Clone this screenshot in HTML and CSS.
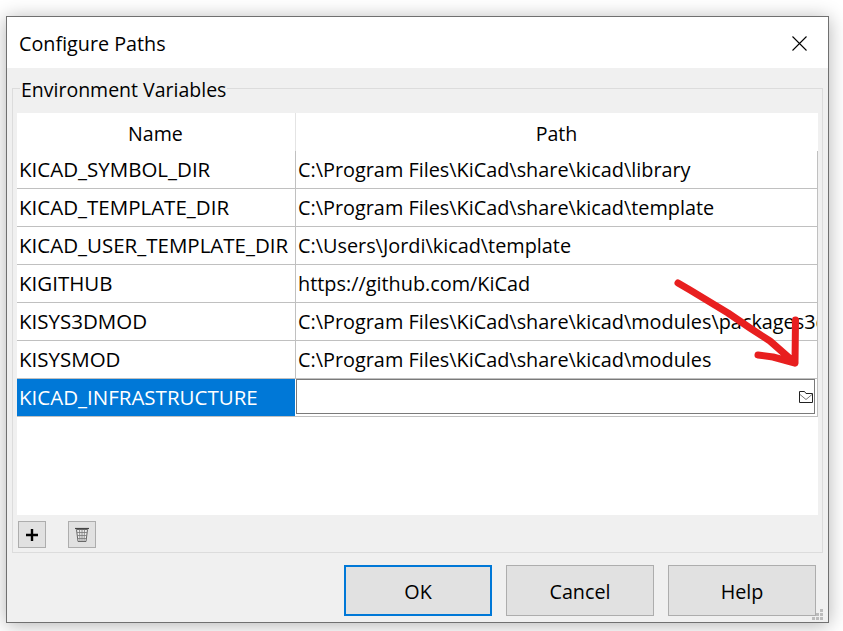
FILE: index.html
```html
<!DOCTYPE html>
<html lang="en">
<head>
<meta charset="utf-8">
<title>Configure Paths</title>
<link rel="stylesheet" href="styles.css">
</head>
<body>
<div class="dialog">
  <header class="titlebar">
    <h1 class="title">Configure Paths</h1>
    <svg class="close" width="15" height="15" viewBox="0 0 15 15"><path d="M0.5 0.5L14.5 14.5M14.5 0.5L0.5 14.5" stroke="#000" stroke-width="1.1" fill="none"/></svg>
  </header>
  <main class="content">
    <section class="group">
      <div class="legend">Environment Variables</div>
      <div class="grid">
        <div class="head">
          <div class="name hcell">Name</div>
          <div class="path hcell">Path</div>
        </div>
        <div class="row"><div class="name cell">KICAD_SYMBOL_DIR</div><div class="path cell">C:\Program Files\KiCad\share\kicad\library</div></div>
        <div class="row"><div class="name cell">KICAD_TEMPLATE_DIR</div><div class="path cell">C:\Program Files\KiCad\share\kicad\template</div></div>
        <div class="row"><div class="name cell">KICAD_USER_TEMPLATE_DIR</div><div class="path cell">C:\Users\Jordi\kicad\template</div></div>
        <div class="row"><div class="name cell">KIGITHUB</div><div class="path cell">https://github.com/KiCad</div></div>
        <div class="row"><div class="name cell">KISYS3DMOD</div><div class="path cell">C:\Program Files\KiCad\share\kicad\modules\packages3d</div></div>
        <div class="row"><div class="name cell">KISYSMOD</div><div class="path cell">C:\Program Files\KiCad\share\kicad\modules</div></div>
        <div class="row"><div class="name cell selected">KICAD_INFRASTRUCTURE</div>
          <div class="path editcell">
            <div class="editor">
              <svg width="14" height="12" viewBox="0 0 14 12"><path d="M0.5 11.5V0.5H5.500L7 2.500H13.500V11.500Z" fill="none" stroke="#222"/><path d="M1 3.500L7 8.500L13 3.500" fill="none" stroke="#777"/></svg>
            </div>
          </div>
        </div>
        <div class="blank"></div>
      </div>
      <div class="tools">
        <button class="tool" type="button" aria-label="Add">
          <svg width="14" height="14" viewBox="0 0 14 14"><path d="M7 1V13M1 7H13" stroke="#000" stroke-width="2.4" fill="none"/></svg>
        </button>
        <button class="tool" type="button" aria-label="Delete">
          <svg width="16" height="16" viewBox="0 0 16 16"><path d="M1 1.500H15" stroke="#444" stroke-width="1.2"/><path d="M2.500 2.500L4 14.500H12L13.500 2.500Z" fill="#ececec" stroke="#666" stroke-width="1"/><path d="M3 5.500H13M3.400 8.500H12.600M3.800 11.500H12.200M5.500 2.500L6 14.500M8 2.500V14.500M10.500 2.500L10 14.500" stroke="#777" stroke-width="0.8" fill="none"/></svg>
        </button>
      </div>
    </section>
    <footer class="actions">
      <button class="btn primary" type="button">OK</button>
      <button class="btn" type="button">Cancel</button>
      <button class="btn" type="button">Help</button>
    </footer>
    <svg class="grip" width="11" height="11" viewBox="0 0 11 11"><path d="M8 0h3v3H8zM4 4h3v3H4zM8 4h3v3H8zM0 8h3v3H0zM4 8h3v3H4zM8 8h3v3H8z" fill="#bcbcbc"/></svg>
  </main>
</div>
<svg class="arrow" width="843" height="631" viewBox="0 0 843 631"><path d="M678 283L690 290L728 313L750 328L770 341L795 363L795.500 320M758 355L773 357L795 363" fill="none" stroke="#e81f1f" stroke-width="7" stroke-linecap="round" stroke-linejoin="round"/></svg>
</body>
</html>
```
FILE: styles.css
```css
html, body {
  margin: 0;
  padding: 0;
  height: 100%;
  background: #fff;
  overflow: hidden;
}
body {
  padding: 16px 0 0 6px;
  box-sizing: border-box;
  font-family: "Open Sans", "Noto Sans", sans-serif;
  font-size: 19.75px;
  color: #000;
}
.dialog {
  width: 823px;
  height: 607px;
  box-sizing: border-box;
  border: 1px solid #707070;
  box-shadow: 0 2px 18px rgba(0, 0, 0, 0.3);
  display: flex;
  flex-direction: column;
  background: #f0f0f0;
}
.titlebar {
  height: 51px;
  flex: none;
  background: #fff;
  display: flex;
  align-items: center;
  justify-content: space-between;
  padding: 1px 21px 0 12px;
  box-sizing: border-box;
}
.title {
  margin: 0;
  padding-top: 1px;
  font-size: 19.75px;
  font-weight: 400;
}
.close {
  display: block;
}
.content {
  flex: 1;
  position: relative;
  display: flex;
  flex-direction: column;
  padding: 20px 5px 0 5px;
  min-height: 0;
}
.group {
  position: relative;
  height: 465px;
  box-sizing: border-box;
  border: 1px solid #dcdcdc;
  padding: 24px 4px 0 4px;
  display: flex;
  flex-direction: column;
}
.legend {
  position: absolute;
  left: 7px;
  top: -10px;
  padding: 0 1px;
  line-height: 22px;
  font-size: 19.5px;
  background: #f0f0f0;
}
.grid {
  height: 402px;
  flex: none;
  background: #fff;
  display: flex;
  flex-direction: column;
}
.head {
  height: 38px;
  display: flex;
  flex: none;
}
.hcell {
  display: flex;
  align-items: center;
  justify-content: center;
  padding: 2px 1px 0 0;
  font-size: 19.6px;
  box-sizing: border-box;
}
.head .name {
  border-right: 1px solid #e4e4e4;
}
.row {
  height: 38px;
  flex: none;
  box-sizing: border-box;
  display: flex;
  border-bottom: 1px solid #c0c0c0;
  border-right: 1px solid #c0c0c0;
}
.name {
  width: 279px;
  flex: none;
  box-sizing: border-box;
}
.name.cell {
  font-size: 20.5px;
  padding-bottom: 2px;
  border-right: 1px solid #c0c0c0;
}
.path {
  flex: 1;
  min-width: 0;
}
.cell {
  display: flex;
  align-items: center;
  padding: 0 0 1px 2px;
  white-space: nowrap;
  overflow: hidden;
  box-sizing: border-box;
}
.path.cell {
  padding-left: 2px;
  font-size: 19.85px;
}
.name.selected {
  background: #0078d7;
  color: #fff;
  border-right: 1px solid #fff;
}
.editcell {
  padding: 0 2px 2px 0;
  box-sizing: border-box;
  display: flex;
}
.editor {
  flex: 1;
  background: #fff;
  border: 1px solid #7a7a7a;
  display: flex;
  align-items: center;
  justify-content: flex-end;
  padding: 1px 1px 0 0;
}
.editor svg {
  display: block;
}
.blank {
  flex: 1;
}
.tools {
  display: flex;
  gap: 22px;
  margin: 6px 0 0 1px;
}
.tool {
  width: 28px;
  height: 27px;
  box-sizing: border-box;
  padding: 0;
  border: 1px solid #adadad;
  background: #e1e1e1;
  display: flex;
  align-items: center;
  justify-content: center;
}
.actions {
  display: flex;
  justify-content: flex-end;
  gap: 14px;
  margin-top: 12px;
  padding-right: 7px;
}
.btn {
  width: 148px;
  height: 51px;
  box-sizing: border-box;
  border: 1px solid #adadad;
  background: #e1e1e1;
  font: inherit;
  color: #000;
  padding: 1px 0 0;
}
.btn.primary {
  border: 2px solid #0078d7;
}
.grip {
  position: absolute;
  right: 5px;
  bottom: 2px;
}
.arrow {
  position: absolute;
  left: 0;
  top: 0;
  pointer-events: none;
}
```
